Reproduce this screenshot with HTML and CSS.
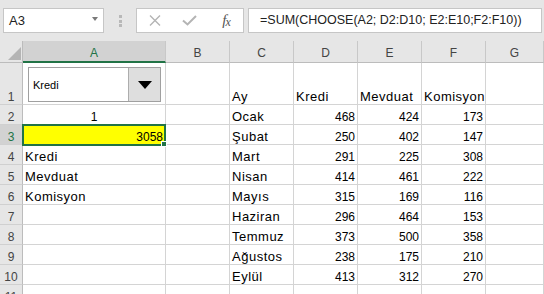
FILE: index.html
```html
<!DOCTYPE html>
<html>
<head>
<meta charset="utf-8">
<link rel="stylesheet" href="styles.css">
</head>
<body>
<div class="fbar">
  <div class="namebox"><span>A3</span><span class="nb-arrow"></span></div>
  <div class="dots"><i></i><i></i><i></i></div>
  <div class="fxbox">
    <span class="ico"><svg width="12" height="11" viewBox="0 0 12 11"><path d="M1 0.5 L11 10.5 M11 0.5 L1 10.5" stroke="#b4b4b4" stroke-width="1.4" fill="none"/></svg></span>
    <span class="ico"><svg width="15" height="11" viewBox="0 0 15 11"><path d="M1 5.5 L5.5 9.5 L14 1" stroke="#b4b4b4" stroke-width="2" fill="none"/></svg></span>
    <span class="ico fx"><span class="f">f</span><span class="x">x</span></span>
  </div>
  <div class="formula">=SUM(CHOOSE(A2; D2:D10; E2:E10;F2:F10))</div>
</div>
<div class="sheet">
  <div class="corner"><span class="tri"></span></div>
  <div class="ch sel">A</div><div class="ch">B</div><div class="ch">C</div><div class="ch">D</div><div class="ch">E</div><div class="ch">F</div><div class="ch">G</div>

  <div class="rh">1</div>
  <div class="c a1"><div class="combo"><div class="txt">Kredi</div><div class="btn"><span class="down"></span></div></div></div>
  <div class="c"></div><div class="c">Ay</div><div class="c">Kredi</div><div class="c">Mevduat</div><div class="c">Komisyon</div><div class="c"></div>

  <div class="rh">2</div>
  <div class="c num ctr">1</div><div class="c"></div><div class="c">Ocak</div><div class="c num">468</div><div class="c num">424</div><div class="c num">173</div><div class="c"></div>

  <div class="rh sel">3</div>
  <div class="c num yel">3058<div class="selbox"><span class="handle"></span></div></div><div class="c"></div><div class="c">Şubat</div><div class="c num">250</div><div class="c num">402</div><div class="c num">147</div><div class="c"></div>

  <div class="rh">4</div>
  <div class="c">Kredi</div><div class="c"></div><div class="c">Mart</div><div class="c num">291</div><div class="c num">225</div><div class="c num">308</div><div class="c"></div>

  <div class="rh">5</div>
  <div class="c">Mevduat</div><div class="c"></div><div class="c">Nisan</div><div class="c num">414</div><div class="c num">461</div><div class="c num">222</div><div class="c"></div>

  <div class="rh">6</div>
  <div class="c">Komisyon</div><div class="c"></div><div class="c">Mayıs</div><div class="c num">315</div><div class="c num">169</div><div class="c num">116</div><div class="c"></div>

  <div class="rh">7</div>
  <div class="c"></div><div class="c"></div><div class="c">Haziran</div><div class="c num">296</div><div class="c num">464</div><div class="c num">153</div><div class="c"></div>

  <div class="rh">8</div>
  <div class="c"></div><div class="c"></div><div class="c">Temmuz</div><div class="c num">373</div><div class="c num">500</div><div class="c num">358</div><div class="c"></div>

  <div class="rh">9</div>
  <div class="c"></div><div class="c"></div><div class="c">Ağustos</div><div class="c num">238</div><div class="c num">175</div><div class="c num">210</div><div class="c"></div>

  <div class="rh">10</div>
  <div class="c"></div><div class="c"></div><div class="c">Eylül</div><div class="c num">413</div><div class="c num">312</div><div class="c num">270</div><div class="c"></div>

  <div class="rh">11</div>
  <div class="c"></div><div class="c"></div><div class="c"></div><div class="c"></div><div class="c"></div><div class="c"></div><div class="c"></div>
</div>
</body>
</html>
```
FILE: styles.css
```css
* { box-sizing: border-box; }
body {
  margin: 0;
  width: 544px;
  height: 294px;
  overflow: hidden;
  background: #fff;
  font-family: "Liberation Sans", Arial, sans-serif;
  color: #000;
}
.fbar {
  height: 41px;
  background: #e6e6e6;
  display: flex;
  align-items: flex-start;
  padding: 8px 2px 0 3px;
}
.namebox {
  width: 101px;
  height: 25px;
  background: #fff;
  border: 1px solid #c6c6c6;
  display: flex;
  align-items: center;
  justify-content: space-between;
  padding: 0 5px 0 5px;
  font-size: 13px;
  color: #222;
}
.nb-arrow {
  width: 0;
  height: 0;
  border-left: 3.5px solid transparent;
  border-right: 3.5px solid transparent;
  border-top: 4px solid #7a7a7a;
  margin-top: -3px;
}
.dots {
  margin: 7px 0 0 15px;
  display: flex;
  flex-direction: column;
  gap: 1.5px;
}
.dots i {
  display: block;
  width: 3px;
  height: 3px;
  background: #b8b8b8;
}
.fxbox {
  margin-left: 14px;
  width: 108px;
  height: 25px;
  background: #fff;
  border: 1px solid #c6c6c6;
  display: flex;
}
.ico {
  width: 35px;
  display: flex;
  align-items: center;
  justify-content: center;
}
.fx {
  font-family: "Liberation Serif", "Times New Roman", serif;
  font-style: italic;
  color: #555;
  font-size: 15px;
  padding-left: 4px;
}
.fx .x {
  font-size: 12px;
  margin-top: 3px;
  margin-left: -1px;
}
.formula {
  margin-left: 4px;
  flex: 1;
  height: 25px;
  background: #fff;
  border: 1px solid #c6c6c6;
  padding-left: 11px;
  font-size: 12.5px;
  line-height: 23px;
  color: #222;
  white-space: nowrap;
}
.sheet {
  display: grid;
  grid-template-columns: 23px 143px 64px 64px 64px 64px 64px 1fr;
  grid-template-rows: 22px 42px repeat(10, 20px);
}
.corner {
  background: #e6e6e6;
  border-right: 1px solid #bcbcbc;
  border-bottom: 1px solid #bcbcbc;
  display: flex;
  align-items: flex-end;
  justify-content: flex-end;
  padding: 0 1px 2px 0;
}
.tri {
  width: 13px;
  height: 13px;
  background: #b4b4b4;
  clip-path: polygon(100% 0, 100% 100%, 0 100%);
}
.ch {
  background: #e6e6e6;
  border-right: 1px solid #c8c8c8;
  border-bottom: 1px solid #bcbcbc;
  font-size: 12px;
  line-height: 14px;
  padding-top: 5px;
  text-align: center;
  color: #444;
}
.ch.sel {
  background: #d2d2d2;
  color: #217346;
  border-bottom: 2px solid #217346;
}
.rh {
  background: #e6e6e6;
  border-right: 1px solid #bcbcbc;
  border-bottom: 1px solid #d0d0d0;
  font-size: 12px;
  line-height: 14px;
  color: #444;
  display: flex;
  align-items: flex-end;
  justify-content: center;
}
.rh.sel {
  background: #d2d2d2;
  color: #217346;
}
.c {
  border-right: 1px solid #d4d4d4;
  border-bottom: 1px solid #d4d4d4;
  font-size: 13px;
  letter-spacing: 0.5px;
  line-height: 14px;
  display: flex;
  align-items: flex-end;
  padding: 0 2px;
  white-space: nowrap;
}
.c.num {
  font-size: 12px;
  letter-spacing: 0;
  justify-content: flex-end;
}
.c.ctr { justify-content: center; }
.a1 { position: relative; }
.combo {
  position: absolute;
  left: 5px;
  top: 4px;
  width: 133px;
  height: 35px;
  border: 1px solid #a0a0a0;
  background: #fff;
  display: flex;
  z-index: 1;
  letter-spacing: 0;
}
.combo .txt {
  flex: 1;
  display: flex;
  align-items: center;
  padding-left: 4px;
  font-size: 11px;
}
.combo .btn {
  width: 32px;
  background: #dedede;
  border-left: 1px solid #adadad;
  display: flex;
  align-items: center;
  justify-content: center;
}
.down {
  width: 0;
  height: 0;
  border-left: 7.5px solid transparent;
  border-right: 7.5px solid transparent;
  border-top: 8px solid #000;
}
.yel {
  background: #ffff00;
  position: relative;
}
.selbox {
  position: absolute;
  left: -1px;
  top: -1px;
  right: -1px;
  bottom: -2px;
  border: 2px solid #217346;
  z-index: 2;
}
.handle {
  position: absolute;
  right: -3px;
  bottom: -3px;
  width: 6px;
  height: 6px;
  background: #217346;
  border: 1px solid #fff;
}
```
